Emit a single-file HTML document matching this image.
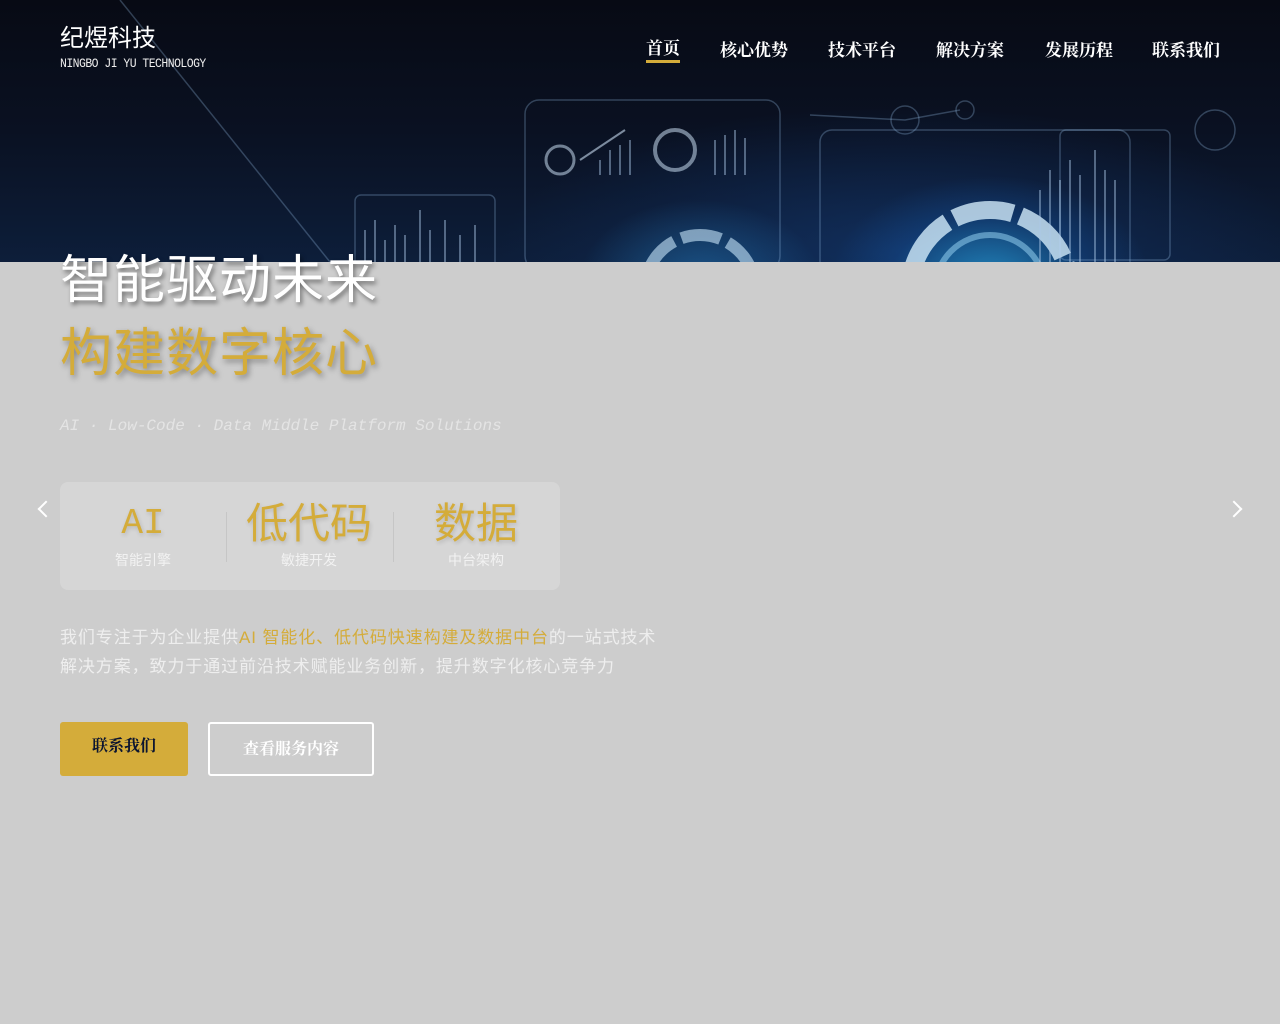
<!DOCTYPE html>
<html><head><meta charset="utf-8">
<style>
*{margin:0;padding:0;box-sizing:border-box}
html,body{width:1280px;height:1024px;overflow:hidden;background:#cdcdcd;font-family:"Liberation Serif","Noto Serif CJK SC",serif}
.hero{position:absolute;left:0;top:0;width:1280px;height:262px;overflow:hidden;
background:
radial-gradient(ellipse 200px 130px at 990px 280px,rgba(40,170,230,.7),rgba(20,90,170,.3) 50%,transparent 80%),
radial-gradient(ellipse 150px 100px at 700px 280px,rgba(40,140,210,.45),transparent 80%),
radial-gradient(ellipse 500px 180px at 900px 250px,rgba(20,60,120,.55),transparent 80%),
linear-gradient(180deg,#070a14 0%,#0a1122 50%,#0d1e3a 100%);}
.hero svg{position:absolute;left:0;top:0}
.logo{position:absolute;left:60px;top:18px;color:#fff;font-size:24px;font-family:"Liberation Sans","Noto Sans CJK SC",sans-serif;}
.logo2{position:absolute;left:60px;top:56px;color:#eee;font-size:13px;font-family:"Liberation Mono",monospace;letter-spacing:-.6px;transform:scaleX(.88);transform-origin:left}
.nav{position:absolute;top:36px;color:#fff;font-size:17px;font-weight:bold}
.ul{position:absolute;left:646px;top:60px;width:34px;height:3px;background:#d4ac3a}
.t1{position:absolute;left:60px;top:238px;font-size:52px;color:#fff;font-family:"Liberation Sans","Noto Sans CJK SC",sans-serif;text-shadow:2px 3px 5px rgba(0,0,0,.45);letter-spacing:1px}
.t2{position:absolute;left:60px;top:311px;font-size:52px;color:#d4ac3a;font-family:"Liberation Sans","Noto Sans CJK SC",sans-serif;text-shadow:2px 3px 6px rgba(0,0,0,.35);letter-spacing:1px}
.sub{position:absolute;left:60px;top:417px;font-size:16px;color:#e4e4e4;font-style:italic;font-family:"Liberation Mono",monospace;letter-spacing:0}
.card{position:absolute;left:60px;top:482px;width:500px;height:108px;background:#d6d6d6;border-radius:8px}
.st{position:absolute;top:0;width:166px;text-align:center}
.st b{display:block;color:#d4ac3a;font-weight:normal;font-size:42px;line-height:44px;margin-top:20px;text-shadow:1px 2px 4px rgba(0,0,0,.15);font-family:"Liberation Sans","Noto Sans CJK SC",sans-serif}
.st span{display:block;color:#f2f2f2;font-size:14px;margin-top:4px;font-family:"Liberation Sans","Noto Sans CJK SC",sans-serif}
.sep{position:absolute;top:30px;width:1px;height:50px;background:#c6c6c6}
.desc{position:absolute;left:60px;top:623px;width:660px;color:#eee;font-size:17px;line-height:29px;letter-spacing:.9px;font-family:"Liberation Sans","Noto Sans CJK SC",sans-serif}
.desc em{font-style:normal;color:#d4ac3a}
.b1{position:absolute;left:60px;top:722px;width:128px;height:54px;background:#d4ac3a;border-radius:3px;color:#0c1530;font-weight:bold;font-size:16px;text-align:center;line-height:50px}
.b2{position:absolute;left:208px;top:722px;width:166px;height:54px;border:2px solid #fff;border-radius:3px;color:#fff;font-weight:bold;font-size:16px;text-align:center;line-height:52px}
.arr{position:absolute;top:503px;width:12px;height:12px;border-left:2px solid #fff;border-bottom:2px solid #fff}
</style></head><body>
<div class="hero">
<svg width="1280" height="262" fill="none" stroke="rgba(150,190,230,.3)" stroke-width="1.5">
<rect x="355" y="195" width="140" height="90" rx="6"/>
<rect x="525" y="100" width="255" height="170" rx="14"/>
<rect x="820" y="130" width="310" height="150" rx="12"/>
<rect x="1060" y="130" width="110" height="130" rx="6"/>
<circle cx="560" cy="160" r="14" stroke="rgba(200,220,240,.55)" stroke-width="3"/>
<circle cx="675" cy="150" r="20" stroke="rgba(200,220,240,.55)" stroke-width="4"/>
<circle cx="905" cy="120" r="14"/><circle cx="1215" cy="130" r="20"/><circle cx="965" cy="110" r="9"/>
<circle cx="990" cy="290" r="80" stroke="rgba(210,235,250,.8)" stroke-width="18" stroke-dasharray="60 8"/>
<circle cx="990" cy="290" r="55" stroke="rgba(160,220,250,.5)" stroke-width="6"/>
<circle cx="700" cy="290" r="55" stroke="rgba(200,230,250,.6)" stroke-width="12" stroke-dasharray="40 8"/>
<path d="M580 160 L625 130" stroke="rgba(200,220,240,.6)" stroke-width="2"/>
<path d="M810 115 L905 120 L960 110"/><path d="M120 0 L330 262"/>
<g stroke="rgba(170,200,230,.45)" stroke-width="2">
<path d="M365 262V230M375 262V220M385 262V240M395 262V225M405 262V235M420 262V210M430 262V230M445 262V220M460 262V235M475 262V225"/>
<path d="M1040 262V190M1050 262V170M1060 262V180M1070 262V160M1080 262V175M1095 262V150M1105 262V170M1115 262V180"/>
<path d="M600 175V160M610 175V150M620 175V145M630 175V140M715 175V140M725 175V135M735 175V130M745 175V138"/>
</g>
</svg>
</div>
<div class="logo">纪煜科技</div>
<div class="logo2">NINGBO JI YU TECHNOLOGY</div>
<div class="nav" style="left:646px;top:34px">首页</div>
<div class="ul"></div>
<div class="nav" style="left:720px">核心优势</div>
<div class="nav" style="left:828px">技术平台</div>
<div class="nav" style="left:936px">解决方案</div>
<div class="nav" style="left:1045px">发展历程</div>
<div class="nav" style="left:1152px">联系我们</div>
<div class="t1">智能驱动未来</div>
<div class="t2">构建数字核心</div>
<div class="sub">AI · Low-Code · Data Middle Platform Solutions</div>
<div class="card">
<div class="st" style="left:0"><b style="font-family:'Liberation Mono',monospace;font-size:36px">AI</b><span>智能引擎</span></div>
<div class="sep" style="left:166px"></div>
<div class="st" style="left:166px"><b>低代码</b><span>敏捷开发</span></div>
<div class="sep" style="left:333px"></div>
<div class="st" style="left:333px"><b>数据</b><span>中台架构</span></div>
</div>
<div class="desc">我们专注于为企业提供<em>AI 智能化、低代码快速构建及数据中台</em>的一站式技术<br>解决方案，致力于通过前沿技术赋能业务创新，提升数字化核心竞争力</div>
<div class="b1">联系我们</div>
<div class="b2">查看服务内容</div>
<div class="arr" style="left:40px;transform:rotate(45deg)"></div>
<div class="arr" style="left:1228px;transform:rotate(-135deg)"></div>
</body></html>
